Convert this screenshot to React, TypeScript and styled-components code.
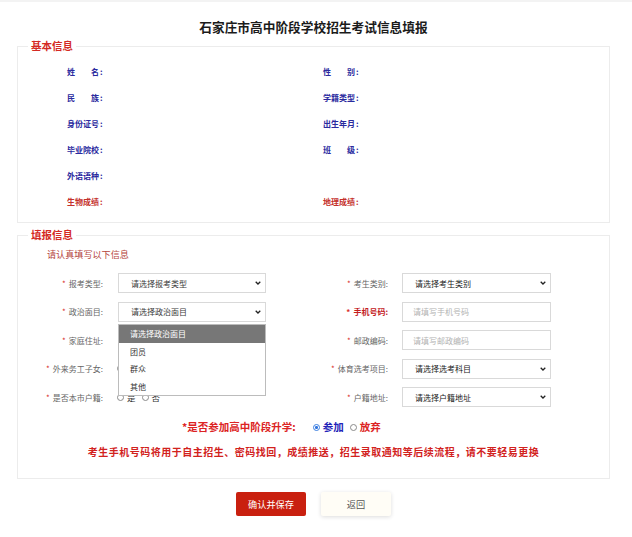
import React from "react";
import styled, { createGlobalStyle } from "styled-components";

const GlobalStyle = createGlobalStyle`
  html, body {
    margin: 0;
    padding: 0;
    background: #ffffff;
  }
  body {
    font-family: "Noto Sans CJK SC", "Noto Sans", sans-serif;
    color: #333;
  }
  *, *::before, *::after {
    box-sizing: border-box;
  }
`;

const Page = styled.div`
  width: 632px;
  padding: 16px 22px 20px 17px;
  border-top: 2px solid #f3f3f3;
`;

const Title = styled.h1`
  margin: 0;
  font-size: 12.7px;
  line-height: 18px;
  font-weight: 700;
  text-align: center;
  color: #1b1b1b;
`;

const Section = styled.fieldset<{ $gap: number }>`
  margin: ${(p) => p.$gap}px 0 0;
  padding: 0;
  min-width: 0;
  border: 1px solid #ececec;
  background: #fff;
`;

const Legend = styled.legend`
  margin-left: 10px;
  padding: 0 3px;
  font-size: 10.5px;
  line-height: 14px;
  font-weight: 700;
  color: #d42a24;
`;

/* ---------- 基本信息 ---------- */

const BasicGrid = styled.div`
  display: grid;
  grid-template-columns: 256px 1fr;
  grid-auto-rows: 26px;
  align-items: center;
  margin: 6px 0 7px 49px;
`;

const BasicLabel = styled.div<{ $tone: "blue" | "red" }>`
  display: flex;
  align-items: center;
  font-size: 8px;
  line-height: 12px;
  font-weight: 700;
  color: ${(p) => (p.$tone === "red" ? "#c4302b" : "#2a2a9e")};
`;

const Spread = styled.span`
  display: inline-flex;
  justify-content: space-between;
  width: 32px;
`;

const Colon = styled.span`
  margin-left: 1px;
`;

/* ---------- 填报信息 ---------- */

const Hint = styled.div`
  margin: 5px 0 0 29px;
  font-size: 9.1px;
  line-height: 14px;
  color: #b5443c;
`;

const FormGrid = styled.div`
  display: grid;
  grid-template-columns: 100px 148px 136px 149px;
  grid-auto-rows: 20px;
  row-gap: 8.5px;
  margin-top: 12px;
`;

const FieldLabel = styled.div<{ $strong?: boolean; $pad: number }>`
  display: flex;
  align-items: center;
  justify-content: flex-end;
  padding-right: ${(p) => p.$pad}px;
  font-size: 8px;
  white-space: nowrap;
  font-weight: ${(p) => (p.$strong ? 700 : 400)};
  color: ${(p) => (p.$strong ? "#c3201d" : "#666")};
`;

const Star = styled.span`
  color: #d9302a;
  margin-right: 3px;
`;

const Field = styled.div`
  position: relative;
`;

const SelectBox = styled.div<{ $dark?: boolean }>`
  display: flex;
  align-items: center;
  justify-content: space-between;
  height: 20px;
  padding: 0 4px 0 12px;
  border: 1px solid #d9d9d9;
  background: #fff;
  font-size: 8px;
  color: ${(p) => (p.$dark ? "#222" : "#3a3a3a")};
`;

const TextBox = styled.div`
  display: flex;
  align-items: center;
  height: 20px;
  padding-left: 10px;
  border: 1px solid #d9d9d9;
  background: #fff;
  font-size: 8px;
  color: #b3b3b3;
`;

const Menu = styled.ul`
  position: absolute;
  left: 0;
  right: 0;
  top: calc(100% + 2.5px);
  margin: 0;
  padding: 0;
  list-style: none;
  background: #fff;
  border: 1px solid #bcbcbc;
  z-index: 5;
`;

const MenuItem = styled.li<{ $active?: boolean }>`
  height: 17.5px;
  line-height: 17.5px;
  padding-left: 11px;
  font-size: 8px;
  color: ${(p) => (p.$active ? "#fff" : "#333")};
  background: ${(p) => (p.$active ? "#777" : "transparent")};
`;

const RadioGroup = styled.div`
  display: flex;
  align-items: center;
  height: 100%;
  margin-left: -1px;
  font-size: 8.5px;
  color: #333;
`;

const RadioOption = styled.span<{ $color?: string; $bold?: boolean }>`
  display: inline-flex;
  align-items: center;
  gap: 3px;
  margin-right: 6px;
  color: ${(p) => p.$color ?? "inherit"};
  font-weight: ${(p) => (p.$bold ? 700 : 400)};
`;

const RadioDot = styled.span<{ $checked?: boolean; $size: number }>`
  display: inline-block;
  width: ${(p) => p.$size}px;
  height: ${(p) => p.$size}px;
  border-radius: 50%;
  border: 1px solid ${(p) => (p.$checked ? "#3b7fe0" : "#8a8a8a")};
  background: ${(p) =>
    p.$checked
      ? "radial-gradient(circle, #2f74df 0 38%, #ffffff 44% 100%)"
      : "#fff"};
`;

const Question = styled.div`
  display: flex;
  align-items: center;
  margin: 13px 0 0 164px;
  line-height: 14px;
  font-size: 10.5px;
  font-weight: 700;
`;

const QuestionText = styled.span`
  color: #dc2323;
  margin-right: 17px;
`;

const Notice = styled.div`
  margin: 11px 0 19px;
  text-align: center;
  font-size: 10px;
  line-height: 14px;
  font-weight: 700;
  letter-spacing: 0.5px;
  color: #d2221d;
`;

const Actions = styled.div`
  display: flex;
  justify-content: center;
  gap: 15px;
  margin-top: 13px;
`;

const Button = styled.button<{ $primary?: boolean }>`
  width: 70px;
  height: 24px;
  border: none;
  border-radius: 2px;
  font-family: inherit;
  font-size: 9.2px;
  background: ${(p) => (p.$primary ? "#c9200f" : "#fffdf6")};
  color: ${(p) => (p.$primary ? "#fff" : "#555")};
  box-shadow: ${(p) => (p.$primary ? "none" : "0 1px 4px rgba(0, 0, 0, 0.14)")};
`;

/* ---------- pieces ---------- */

const Chevron = () => (
  <svg width="6" height="4" viewBox="0 0 6 4" aria-hidden="true">
    <polyline points="0.7,0.8 3,3 5.3,0.8" fill="none" stroke="#222" strokeWidth="1.3" />
  </svg>
);

type BasicItem = { text: string; tone: "blue" | "red" } | null;

const basicRows: [BasicItem, BasicItem][] = [
  [{ text: "姓名", tone: "blue" }, { text: "性别", tone: "blue" }],
  [{ text: "民族", tone: "blue" }, { text: "学籍类型", tone: "blue" }],
  [{ text: "身份证号", tone: "blue" }, { text: "出生年月", tone: "blue" }],
  [{ text: "毕业院校", tone: "blue" }, { text: "班级", tone: "blue" }],
  [{ text: "外语语种", tone: "blue" }, null],
  [{ text: "生物成绩", tone: "red" }, { text: "地理成绩", tone: "red" }],
];

const BasicCell = ({ item }: { item: BasicItem }) =>
  item ? (
    <BasicLabel $tone={item.tone}>
      <Spread>
        {item.text.split("").map((ch, i) => (
          <span key={i}>{ch}</span>
        ))}
      </Spread>
      <Colon>:</Colon>
    </BasicLabel>
  ) : (
    <div />
  );

// Yes/No choice; labels can be left off when an open menu lies on top.
const YesNo = ({ labels = true }: { labels?: boolean }) => (
  <RadioGroup>
    <RadioOption>
      <RadioDot $size={7} />
      {labels && "是"}
    </RadioOption>
    <RadioOption>
      <RadioDot $size={7} />
      {labels && "否"}
    </RadioOption>
  </RadioGroup>
);

export default function App() {
  return (
    <>
      <GlobalStyle />
      <Page>
        <Title>石家庄市高中阶段学校招生考试信息填报</Title>

        <Section $gap={3}>
          <Legend>基本信息</Legend>
          <BasicGrid>
            {basicRows.map(([l, r], i) => (
              <React.Fragment key={i}>
                <BasicCell item={l} />
                <BasicCell item={r} />
              </React.Fragment>
            ))}
          </BasicGrid>
        </Section>

        <Section $gap={5}>
          <Legend>填报信息</Legend>
          <Hint>请认真填写以下信息</Hint>
          <FormGrid>
            <FieldLabel $pad={15}>
              <Star>*</Star>报考类型:
            </FieldLabel>
            <Field>
              <SelectBox>
                请选择报考类型
                <Chevron />
              </SelectBox>
            </Field>
            <FieldLabel $pad={14}>
              <Star>*</Star>考生类别:
            </FieldLabel>
            <Field>
              <SelectBox $dark>
                请选择考生类别
                <Chevron />
              </SelectBox>
            </Field>

            <FieldLabel $pad={15}>
              <Star>*</Star>政治面目:
            </FieldLabel>
            <Field>
              <SelectBox>
                请选择政治面目
                <Chevron />
              </SelectBox>
              <Menu>
                <MenuItem $active>请选择政治面目</MenuItem>
                <MenuItem>团员</MenuItem>
                <MenuItem>群众</MenuItem>
                <MenuItem>其他</MenuItem>
              </Menu>
            </Field>
            <FieldLabel $pad={14} $strong>
              <Star>*</Star>手机号码:
            </FieldLabel>
            <Field>
              <TextBox>请填写手机号码</TextBox>
            </Field>

            <FieldLabel $pad={15}>
              <Star>*</Star>家庭住址:
            </FieldLabel>
            <Field>
              <TextBox />
            </Field>
            <FieldLabel $pad={14}>
              <Star>*</Star>邮政编码:
            </FieldLabel>
            <Field>
              <TextBox>请填写邮政编码</TextBox>
            </Field>

            <FieldLabel $pad={15}>
              <Star>*</Star>外来务工子女:
            </FieldLabel>
            <Field>
              <YesNo labels={false} />
            </Field>
            <FieldLabel $pad={14}>
              <Star>*</Star>体育选考项目:
            </FieldLabel>
            <Field>
              <SelectBox $dark>
                请选择选考科目
                <Chevron />
              </SelectBox>
            </Field>

            <FieldLabel $pad={15}>
              <Star>*</Star>是否本市户籍:
            </FieldLabel>
            <Field>
              <YesNo />
            </Field>
            <FieldLabel $pad={14}>
              <Star>*</Star>户籍地址:
            </FieldLabel>
            <Field>
              <SelectBox $dark>
                请选择户籍地址
                <Chevron />
              </SelectBox>
            </Field>
          </FormGrid>

          <Question>
            <QuestionText>*是否参加高中阶段升学:</QuestionText>
            <RadioOption $color="#2323b8" $bold>
              <RadioDot $checked $size={7} />参加
            </RadioOption>
            <RadioOption $color="#dc2323" $bold>
              <RadioDot $size={7} />放弃
            </RadioOption>
          </Question>

          <Notice>
            考生手机号码将用于自主招生、密码找回，成绩推送，招生录取通知等后续流程，请不要轻易更换
          </Notice>
        </Section>

        <Actions>
          <Button $primary>确认并保存</Button>
          <Button>返回</Button>
        </Actions>
      </Page>
    </>
  );
}
